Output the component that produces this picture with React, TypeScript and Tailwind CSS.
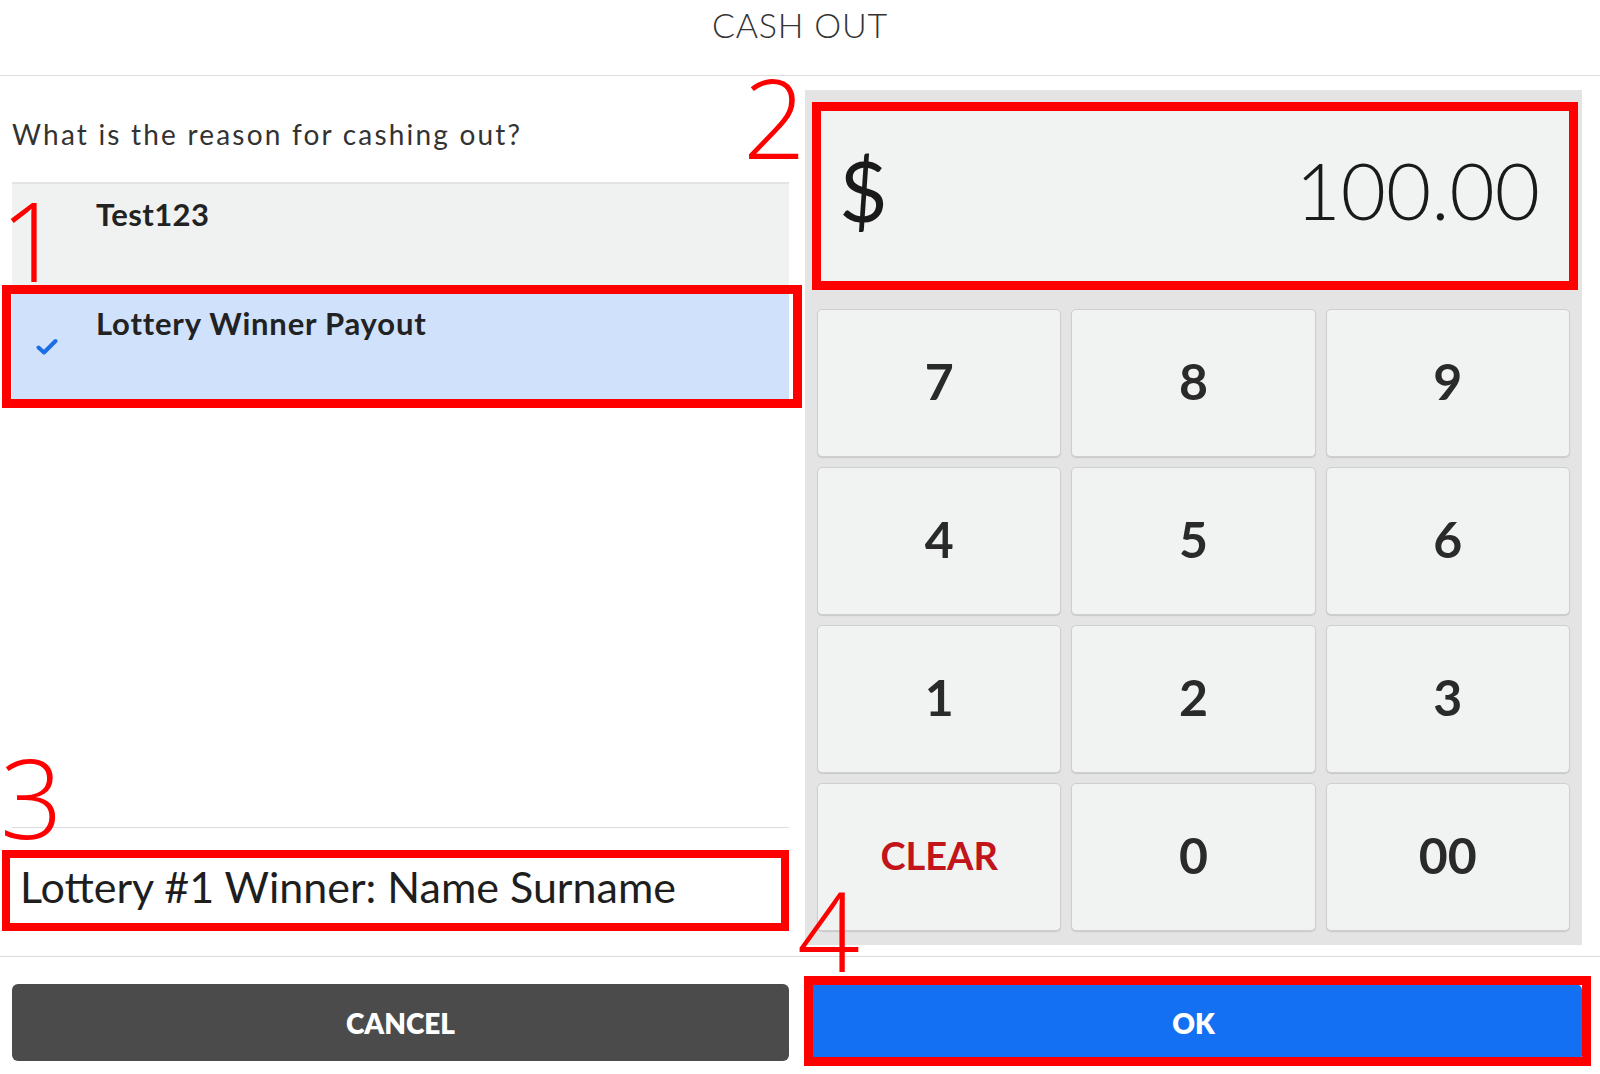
import React from "react";

const keys: { label: string; red?: boolean }[] = [
  { label: "7" }, { label: "8" }, { label: "9" },
  { label: "4" }, { label: "5" }, { label: "6" },
  { label: "1" }, { label: "2" }, { label: "3" },
  { label: "CLEAR", red: true }, { label: "0" }, { label: "00" },
];

export default function App() {
  return (
    <div className="relative w-[1600px] h-[1074px] bg-white flex flex-col overflow-hidden font-['Lato',sans-serif] text-[#222]">
      {/* header */}
      <div className="h-[76px] shrink-0 border-b border-[#dedede] flex justify-center pt-[5px]">
        <span className="text-[34px] leading-[1.2] font-light text-[#333] tracking-[0.8px]">CASH OUT</span>
      </div>

      {/* main */}
      <div className="flex-1 min-h-0 flex gap-4 pl-3 pr-[18px]">
        {/* left column */}
        <div className="w-[777px] flex flex-col pb-[10px]">
          <div className="h-[106px] shrink-0 pt-[42px]">
            <span className="text-[28px] leading-[1.2] text-[#333] tracking-[2.2px]">What is the reason for cashing out?</span>
          </div>
          <div className="border-t-2 border-[#e2e3e3]">
            <div className="h-[105px] bg-[#f0f1f1] flex pt-[12px]">
              <div className="w-[84px]" />
              <span className="text-[31px] leading-[1.2] font-bold text-[#222] tracking-[0.4px]">Test123</span>
            </div>
            <div className="h-[112px] bg-[#cfe1fb] flex pt-[16px] relative">
              <div className="w-[84px] relative">
                <svg className="absolute left-[24px] top-[33px]" width="22" height="18" viewBox="0 0 22 18">
                  <path d="M2.5 9.5 L8 14.5 L19.5 3" fill="none" stroke="#1b6fe6" strokeWidth="4" strokeLinecap="round" strokeLinejoin="round" />
                </svg>
              </div>
              <span className="text-[31px] leading-[1.2] font-bold text-[#222] tracking-[0.8px]">Lottery Winner Payout</span>
            </div>
          </div>
          <div className="flex-1" />
          <div className="h-[119px] shrink-0 border-t border-[#dcdcdc] flex items-center pl-2">
            <span className="text-[43px] leading-[1.2] text-[#1e1e1e]">Lottery #1 Winner: Name Surname</span>
          </div>
        </div>

        {/* right keypad panel */}
        <div className="w-[777px] mt-[14px] mb-[11px] bg-[#e4e4e4] pt-[13px] px-[12px] pb-[14px] flex flex-col">
          <div className="h-[187px] shrink-0 bg-[#f1f2f2] flex items-center justify-between pl-[22px] pr-[30px] pb-[14px]">
            <span className="text-[84px] leading-none text-[#1a1a1a]">$</span>
            <span className="text-[78px] leading-none font-light text-[#1a1a1a]">100.00</span>
          </div>
          <div className="flex-1 mt-[19px] grid grid-cols-3 grid-rows-4 gap-[10px]">
            {keys.map((k) => (
              <div
                key={k.label}
                className="bg-[#f1f2f2] border border-[#cfcfcf] rounded-[5px] shadow-[0_1px_1px_rgba(0,0,0,0.12)] flex items-center justify-center pb-[4px]"
              >
                {k.red ? (
                  <span className="text-[38px] font-bold text-[#c1141b]">{k.label}</span>
                ) : (
                  <span className="text-[50px] font-bold text-[#2a2a2a]">{k.label}</span>
                )}
              </div>
            ))}
          </div>
        </div>
      </div>

      {/* footer */}
      <div className="h-[118px] shrink-0 border-t border-[#dcdcdc] flex gap-4 pl-3 pr-[18px] pt-[27px]">
        <button className="w-[777px] h-[77px] rounded-[6px] bg-[#4b4b4b] text-white text-[28px] font-extrabold">CANCEL</button>
        <button className="w-[777px] h-[77px] rounded-[6px] bg-[#1470f2] text-white text-[28px] font-extrabold">OK</button>
      </div>

      {/* annotations */}
      <div className="absolute left-[2px] top-[285px] w-[800px] h-[123px] border-[9px] border-[#ff0000]" />
      <div className="absolute left-[812px] top-[102px] w-[766px] h-[188px] border-[9px] border-[#ff0000]" />
      <div className="absolute left-[2px] top-[850px] w-[787px] h-[81px] border-[8px] border-[#ff0000]" />
      <div className="absolute left-[804px] top-[976px] w-[787px] h-[90px] border-[9px] border-[#ff0000]" />
      <span className="absolute left-0 top-[184px] text-[110px] leading-none font-[350] font-['Open_Sans',sans-serif] text-[#ff0000]">1</span>
      <span className="absolute left-[743px] top-[61px] text-[110px] leading-none font-[350] font-['Open_Sans',sans-serif] text-[#ff0000]">2</span>
      <span className="absolute left-0 top-[741px] text-[110px] leading-none font-[350] font-['Open_Sans',sans-serif] text-[#ff0000]">3</span>
      <span className="absolute left-[797px] top-[874px] text-[110px] leading-none font-[350] font-['Open_Sans',sans-serif] text-[#ff0000]">4</span>
    </div>
  );
}
